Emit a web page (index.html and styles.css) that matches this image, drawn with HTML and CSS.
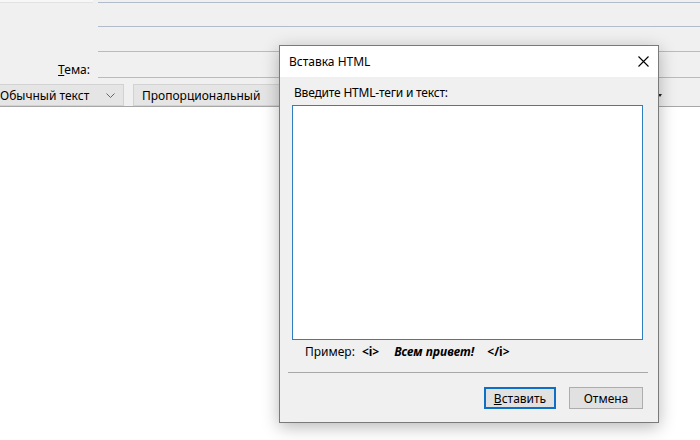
FILE: index.html
```html
<!doctype html>
<html lang="ru">
<head>
  <meta charset="utf-8">
  <title>Вставка HTML</title>
  <link rel="stylesheet" href="styles.css">
</head>
<body>
  <div class="compose">
    <div class="header">
      <div class="side">
        <div class="side-box"></div>
        <label class="subject-label"><u>Т</u>ема:</label>
      </div>
      <div class="fields">
        <div class="field f0"></div>
        <div class="field f1"></div>
        <div class="field f2"></div>
        <div class="field f3"></div>
      </div>
    </div>
    <div class="toolbar">
      <div class="select para">
        <span>Обычный текст</span>
        <svg class="chev" width="9" height="5" viewBox="0 0 9 5"><path d="M0.5 0.5 L4.5 4.5 L8.5 0.5" fill="none" stroke="#666" stroke-width="1"/></svg>
      </div>
      <div class="select font"><span>Пропорциональный</span></div>
      <div class="size"><span class="tri"></span></div>
    </div>
    <div class="editor"></div>
  </div>

  <div class="dialog">
    <div class="titlebar">
      <span class="title">Вставка HTML</span>
      <svg class="close" width="11" height="11" viewBox="0 0 11 11"><path d="M0.5 0.5 L10.5 10.5 M10.5 0.5 L0.5 10.5" stroke="#000" stroke-width="1.1"/></svg>
    </div>
    <div class="dialog-body">
      <div class="prompt">Введите HTML-теги и текст:</div>
      <div class="html-input"></div>
      <div class="example">
        <span class="ex-label">Пример:</span>
        <b>&lt;i&gt;</b>
        <b class="ex-text"><i>Всем привет!</i></b>
        <b class="ex-close">&lt;/i&gt;</b>
      </div>
      <hr class="sep">
      <div class="buttons">
        <button class="btn default" type="button"><u>В</u>ставить</button>
        <button class="btn" type="button">Отмена</button>
      </div>
    </div>
  </div>
</body>
</html>
```

FILE: styles.css
```css
body {
  margin: 0;
  width: 700px;
  height: 440px;
  overflow: hidden;
  font-family: "Noto Sans", "Open Sans", sans-serif;
  font-size: 12px;
  color: #000;
  background: #fff;
}

.compose {
  display: flex;
  flex-direction: column;
  height: 440px;
}

.header {
  display: flex;
  background: #f0f0f0;
}

.side {
  width: 98px;
  display: flex;
  flex-direction: column;
}

.side-box {
  width: 93px;
  height: 2px;
  background: #f7f7f7;
  border-bottom: 1px solid #e2e2e2;
}

.subject-label {
  margin-top: auto;
  padding-right: 8px;
  text-align: right;
  line-height: 16px;
}

.fields {
  flex: 1;
}

.field {
  border-bottom: 1px solid #b3bccb;
}
.f0 { height: 2px; }
.f1 { height: 23px; }
.f2 { height: 24px; }
.f3 { height: 25px; }

.toolbar {
  display: flex;
  align-items: flex-start;
  gap: 9px;
  height: 29px;
  padding-top: 6px;
  box-sizing: border-box;
  background: #f0f0f0;
  border-bottom: 1px solid #a7a7a7;
}

.select {
  display: flex;
  align-items: center;
  height: 22px;
  box-sizing: border-box;
  padding: 0 8px;
  background: #e5e5e5;
  border: 1px solid #d2d2d2;
}

.select.para {
  margin-left: -8px;
  width: 132px;
  padding-left: 7px;
}
.select.para .chev {
  margin-left: auto;
}

.select.font {
  width: 190px;
}

.size {
  display: flex;
  align-items: center;
  height: 22px;
  margin-left: auto;
  padding-right: 38px;
}

.tri {
  width: 0;
  height: 0;
  border-left: 2px solid transparent;
  border-right: 2px solid transparent;
  border-top: 3px solid #222;
}

.editor {
  flex: 1;
  background: #fff;
}

/* dialog */
.dialog {
  position: absolute;
  left: 279px;
  top: 45px;
  width: 380px;
  height: 378px;
  box-sizing: border-box;
  border: 1px solid #7a7a7a;
  background: #f0f0f0;
  box-shadow: 0 4px 16px rgba(0, 0, 0, 0.28);
  display: flex;
  flex-direction: column;
}

.titlebar {
  display: flex;
  align-items: center;
  height: 31px;
  padding: 0 9px 0 9px;
  background: #fff;
}

.close {
  margin-left: auto;
}

.dialog-body {
  flex: 1;
  display: flex;
  flex-direction: column;
  padding: 8px 9px 13px 12px;
}

.prompt {
  padding-left: 2px;
  line-height: 16px;
  margin-bottom: 4px;
  letter-spacing: -0.2px;
}

.html-input {
  height: 235px;
  width: 351px;
  box-sizing: border-box;
  background: #fff;
  border: 1px solid #2f7fc0;
}

.example {
  display: flex;
  gap: 12px;
  padding-left: 13px;
  margin-top: 4px;
  line-height: 16px;
}
.ex-label {
  margin-right: -5px;
}
.ex-text {
  margin-left: 3px;
}
.ex-close {
  margin-left: 1px;
}

.sep {
  width: 360px;
  margin: 12px 0 0 -4px;
  border: 0;
  border-top: 1px solid #a8a8a8;
}

.buttons {
  display: flex;
  justify-content: flex-end;
  gap: 13px;
  margin-top: auto;
  padding-right: 6px;
}

.btn {
  height: 22px;
  width: 74px;
  box-sizing: border-box;
  font: inherit;
  color: #000;
  background: #e1e1e1;
  border: 1px solid #adadad;
  padding: 0;
}

.btn.default {
  width: 72px;
  border: 2px solid #0d6fc6;
}
```
